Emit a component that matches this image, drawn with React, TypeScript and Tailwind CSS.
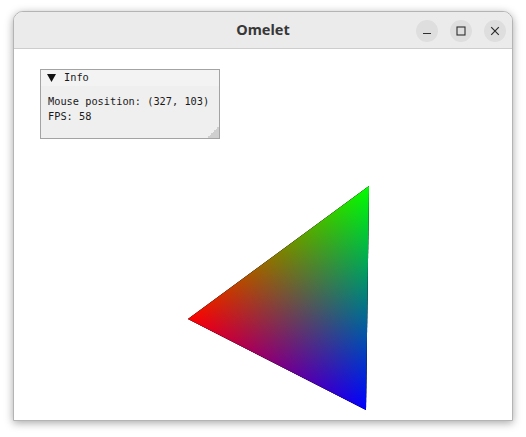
import React from 'react';

// vertices in content-area coordinates
const R = { x: 174, y: 270 };
const G = { x: 355, y: 137 };
const B = { x: 352, y: 361 };

const foot = (p: { x: number; y: number }, a: { x: number; y: number }, b: { x: number; y: number }) => {
  const dx = b.x - a.x;
  const dy = b.y - a.y;
  const t = ((p.x - a.x) * dx + (p.y - a.y) * dy) / (dx * dx + dy * dy);
  return { x: a.x + t * dx, y: a.y + t * dy };
};

const Triangle: React.FC = () => {
  const pts = `${R.x},${R.y} ${G.x},${G.y} ${B.x},${B.y}`;
  const fr = foot(R, G, B);
  const fg = foot(G, R, B);
  const fb = foot(B, R, G);
  return (
    <svg className="absolute inset-0" width="498" height="371" viewBox="0 0 498 371">
      <defs>
        <linearGradient id="gr" gradientUnits="userSpaceOnUse" x1={R.x} y1={R.y} x2={fr.x} y2={fr.y}>
          <stop offset="0" stopColor="#ff0000" />
          <stop offset="1" stopColor="#000000" />
        </linearGradient>
        <linearGradient id="gg" gradientUnits="userSpaceOnUse" x1={G.x} y1={G.y} x2={fg.x} y2={fg.y}>
          <stop offset="0" stopColor="#00ff00" />
          <stop offset="1" stopColor="#000000" />
        </linearGradient>
        <linearGradient id="gb" gradientUnits="userSpaceOnUse" x1={B.x} y1={B.y} x2={fb.x} y2={fb.y}>
          <stop offset="0" stopColor="#0000ff" />
          <stop offset="1" stopColor="#000000" />
        </linearGradient>
      </defs>
      <g style={{ isolation: 'isolate' }}>
        <polygon points={pts} fill="url(#gr)" />
        <polygon points={pts} fill="url(#gg)" style={{ mixBlendMode: 'screen' }} />
        <polygon points={pts} fill="url(#gb)" style={{ mixBlendMode: 'screen' }} />
      </g>
    </svg>
  );
};

const WinButton: React.FC<{ children: React.ReactNode }> = ({ children }) => (
  <div className="w-[22px] h-[22px] rounded-full bg-[#dedede] flex items-center justify-center">
    {children}
  </div>
);

export default function App() {
  return (
    <div className="w-[526px] h-[437px] bg-white pt-[11px] pl-[13px] overflow-hidden">
      <div className="w-[500px] h-[410px] flex flex-col rounded-t-[10px] border border-[#b4b4b4] bg-white shadow-[0_2px_8px_rgba(0,0,0,0.35)] overflow-hidden">
        {/* title bar */}
        <div className="relative h-[37px] shrink-0 bg-[#ebebeb] border-b border-[#cdcdcd] flex items-center justify-center">
          <span className="text-[14.5px] font-bold text-[#383838]" style={{ fontFamily: '"Noto Sans", sans-serif' }}>
            Omelet
          </span>
          <div className="absolute right-[6px] top-[8px] flex gap-[12px]">
            <WinButton>
              <svg width="10" height="10" viewBox="0 0 10 10">
                <path d="M1 7.5h8" stroke="#2e2e2e" strokeWidth="1.2" />
              </svg>
            </WinButton>
            <WinButton>
              <svg width="10" height="10" viewBox="0 0 10 10">
                <rect x="1" y="1" width="8" height="8" fill="none" stroke="#2e2e2e" strokeWidth="1.1" />
              </svg>
            </WinButton>
            <WinButton>
              <svg width="10" height="10" viewBox="0 0 10 10">
                <path d="M1.2 1.2l7.6 7.6M8.8 1.2l-7.6 7.6" stroke="#2e2e2e" strokeWidth="1.2" />
              </svg>
            </WinButton>
          </div>
        </div>

        {/* canvas area */}
        <div className="relative flex-1">
          <Triangle />

          {/* Info overlay panel */}
          <div
            className="absolute left-[26px] top-[20px] w-[180px] h-[70px] border border-[#a3a3a3] bg-[#efefef] text-[#1a1a1a] text-[10.3px]"
            style={{ fontFamily: '"DejaVu Sans Mono", monospace' }}
          >
            <div className="h-[16px] bg-[#f3f3f3] flex items-center pl-[6px] gap-[8px]">
              <svg width="9" height="8" viewBox="0 0 9 8">
                <path d="M0 0h9L4.5 8z" fill="#111111" />
              </svg>
              <span>Info</span>
            </div>
            <div className="pl-[7px] pt-[8px] leading-[15px]">
              <div>Mouse position: (327, 103)</div>
              <div>FPS: 58</div>
            </div>
            <div className="absolute right-0 bottom-0 w-[12px] h-[12px] bg-[linear-gradient(135deg,transparent_50%,#cfcfcf_50%)]" />
          </div>
        </div>
      </div>
    </div>
  );
}
